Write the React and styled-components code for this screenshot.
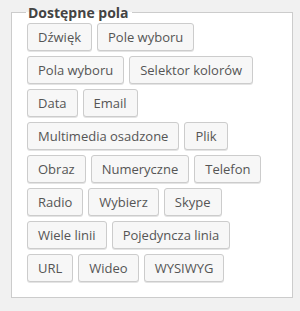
import React from 'react';
import styled, { createGlobalStyle } from 'styled-components';

const GlobalStyle = createGlobalStyle`
  html, body {
    margin: 0;
    padding: 0;
    background: #f1f1f1;
    font-family: "Open Sans", "Liberation Sans", sans-serif;
  }
`;

const Page = styled.div`
  padding: 4px 7px 10px 11px;
`;

const FieldSet = styled.fieldset`
  margin: 0;
  padding: 2px 15px 15px 15px;
  border: 1px solid #ccc;
  background: #fff;
  min-width: 0;
`;

const Legend = styled.legend`
  padding: 0 3px 0 2px;
  margin-left: -1px;
  font-size: 14px;
  line-height: 17px;
  font-weight: 700;
  color: #444;
`;

const FieldList = styled.div`
  display: flex;
  flex-wrap: wrap;
  gap: 5px;
`;

const FieldButton = styled.button`
  box-sizing: border-box;
  height: 28px;
  padding: 0 10px 1px;
  margin: 0;
  border: 1px solid #ccc;
  border-radius: 3px;
  background: #f7f7f7;
  box-shadow: 0 1px 0 #e4e4e4;
  color: #555;
  font-family: inherit;
  font-size: 13px;
  line-height: 26px;
  white-space: nowrap;
  cursor: pointer;

  &:hover {
    background: #fafafa;
    border-color: #999;
    color: #23282d;
  }
`;

const fields = [
  'Dźwięk',
  'Pole wyboru',
  'Pola wyboru',
  'Selektor kolorów',
  'Data',
  'Email',
  'Multimedia osadzone',
  'Plik',
  'Obraz',
  'Numeryczne',
  'Telefon',
  'Radio',
  'Wybierz',
  'Skype',
  'Wiele linii',
  'Pojedyncza linia',
  'URL',
  'Wideo',
  'WYSIWYG',
];

const App = () => (
  <>
    <GlobalStyle />
    <Page>
      <FieldSet>
        <Legend>Dostępne pola</Legend>
        <FieldList>
          {fields.map((name) => (
            <FieldButton key={name} type="button">{name}</FieldButton>
          ))}
        </FieldList>
      </FieldSet>
    </Page>
  </>
);

export default App;
